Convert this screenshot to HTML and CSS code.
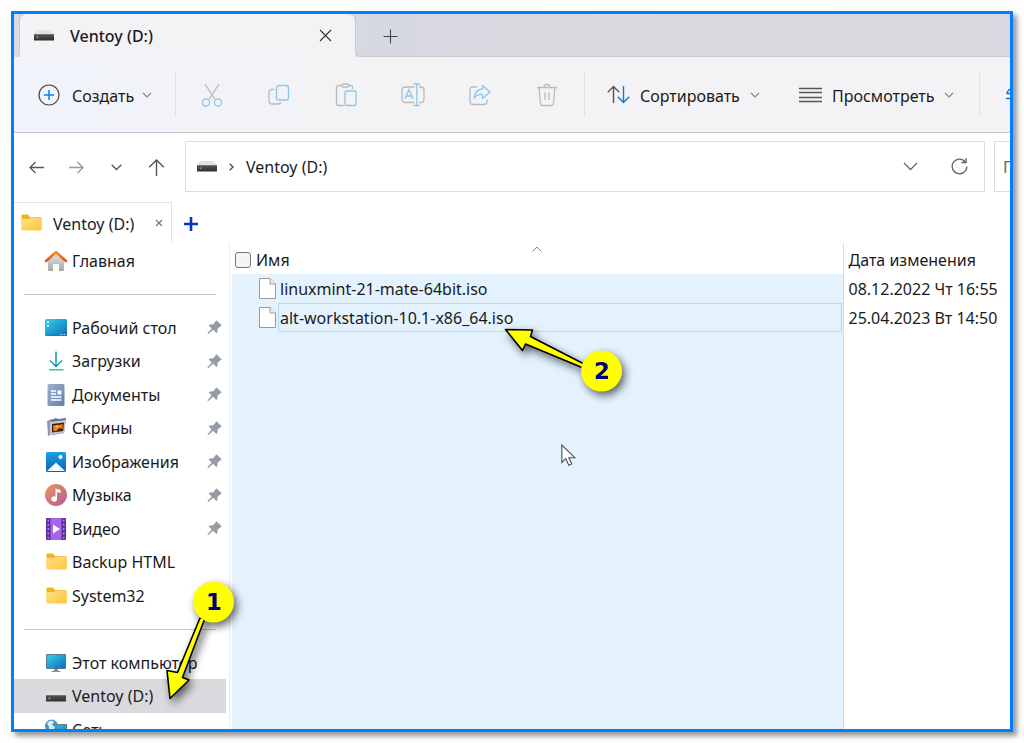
FILE: index.html
```html
<!DOCTYPE html>
<html lang="ru">
<head>
<meta charset="utf-8">
<title>Ventoy (D:)</title>
<meta name="viewport" content="width=device-width, initial-scale=1">
<link rel="stylesheet" href="styles.css">
</head>
<body>
<svg class="defs" aria-hidden="true">
  <defs>
    <linearGradient id="g-folder" x1="0" y1="0" x2="1" y2="1"><stop offset="0" stop-color="#ffe08a"/><stop offset="1" stop-color="#fcc63c"/></linearGradient>
    <linearGradient id="g-screen" x1="0" y1="0" x2="1" y2="1"><stop offset="0" stop-color="#34d3e0"/><stop offset="1" stop-color="#0f6cc0"/></linearGradient>
    <linearGradient id="g-house" x1="0" y1="0" x2="0" y2="1"><stop offset="0" stop-color="#e6e6e6"/><stop offset="1" stop-color="#a8a8a8"/></linearGradient>
    <linearGradient id="g-roof" x1="0" y1="0" x2="0" y2="1"><stop offset="0" stop-color="#f8912c"/><stop offset="1" stop-color="#d95412"/></linearGradient>
    <linearGradient id="g-down" x1="0" y1="0" x2="0" y2="1"><stop offset="0" stop-color="#3cbf9c"/><stop offset="1" stop-color="#158fb0"/></linearGradient>
    <linearGradient id="g-doc" x1="0" y1="0" x2="1" y2="1"><stop offset="0" stop-color="#9db4d0"/><stop offset="1" stop-color="#5f7fa8"/></linearGradient>
    <linearGradient id="g-pic" x1="0" y1="0" x2="0" y2="1"><stop offset="0" stop-color="#1aa0e8"/><stop offset="1" stop-color="#0c63b4"/></linearGradient>
    <linearGradient id="g-music" x1="0" y1="0" x2="1" y2="1"><stop offset="0" stop-color="#ee9560"/><stop offset="1" stop-color="#b65a92"/></linearGradient>
    <linearGradient id="g-bar" x1="0" y1="0" x2="0" y2="1"><stop offset="0" stop-color="#555"/><stop offset="1" stop-color="#303030"/></linearGradient>
    <symbol id="drive" viewBox="0 0 20 11"><path d="M3.500 0h13L20 4H0z" fill="#e2e2e2"/><path d="M0 4h20v6.500H0z" fill="url(#g-bar)"/><path d="M0 4h20v1H0z" fill="#777"/><circle cx="3.500" cy="7.300" r="1" fill="#36d336"/></symbol>
    <symbol id="folder" viewBox="0 0 21 18"><path d="M.5 1.500Q.5.500 1.500.500h5.500l2 2.500h10.500q1 0 1 1V15H.5z" fill="#f3b51f"/><path d="M.5 5h7.500l2-1.500h9.500q1 0 1 1v11q0 1-1 1h-18q-1 0-1-1z" fill="url(#g-folder)"/></symbol>
    <symbol id="chev" viewBox="0 0 10 6"><path d="M1 1l4 4 4-4" fill="none" stroke="currentColor" stroke-width="1.200"/></symbol>
    <symbol id="pin" viewBox="0 0 16 16"><path d="M9.500.800q.6-.6 1.200 0l4.500 4.500q.6.600 0 1.200l-1.200.500-2.700 2.400q.4 2.600-1.100 4.600L6.600 10.500 1.200 15.200l-.8-.8L5 9 1.600 5.600Q3.800 4.300 6.300 4.700L8.700 2z" fill="#949da5"/></symbol>
    <symbol id="file" viewBox="0 0 17 21"><path d="M.5.500H11l5.500 5.500v14.500H.5z" fill="#fff" stroke="#9a9a9a"/><path d="M11 .5V6h5.500" fill="#f1f1f1" stroke="#9a9a9a"/></symbol>
  </defs>
</svg>

<main class="window">
  <header class="titlebar">
    <span class="titlebar-edge"></span>
    <div class="tab">
      <svg class="drive"><use href="#drive"/></svg>
      <span class="tab-title">Ventoy (D:)</span>
      <button class="plain" aria-label="Закрыть"><svg width="13" height="13" viewBox="0 0 13 13"><path d="M1 1l11 11M12 1L1 12" stroke="#333" stroke-width="1.100"/></svg></button>
    </div>
    <div class="titlebar-rest">
      <button class="plain" aria-label="Новая вкладка"><svg width="15" height="15" viewBox="0 0 15 15"><path d="M7.500.500v14M.5 7.500h14" stroke="#444" stroke-width="1.100"/></svg></button>
    </div>
  </header>

  <div class="toolbar">
    <button class="tool tool-new">
      <svg width="22" height="22" viewBox="0 0 22 22" fill="none"><circle cx="11" cy="11" r="10" stroke="#444" stroke-width="1.200"/><path d="M11 6v10M6 11h10" stroke="#0a84d8" stroke-width="1.500"/></svg>
      <span>Создать</span><svg class="chev"><use href="#chev"/></svg>
    </button>
    <span class="divider"></span>
    <div class="tool-icons">
      <button class="plain" aria-label="Вырезать"><svg width="24" height="24" viewBox="0 0 24 24" fill="none" stroke-width="1.300"><path d="M5 1l9.800 15.200M19 1L9.200 16.200" stroke="#bbb"/><circle cx="6" cy="19.500" r="3.600" stroke="#8ec5ee"/><circle cx="18" cy="19.500" r="3.600" stroke="#8ec5ee"/></svg></button>
      <button class="plain" aria-label="Копировать"><svg width="24" height="24" viewBox="0 0 24 24" fill="none" stroke-width="1.300"><path d="M7 6.500H5Q2 6.500 2 9.500v8q0 3.500 3.500 3.500h5q3 0 3-2" stroke="#bbb"/><rect x="9.500" y="2.500" width="12" height="14.500" rx="2.500" stroke="#8ec5ee"/></svg></button>
      <button class="plain" aria-label="Вставить"><svg width="24" height="24" viewBox="0 0 24 24" fill="none" stroke-width="1.300"><path d="M8 2.500H4Q2.500 2.500 2.500 4v17q0 1.500 1.500 1.500h5.500M14.500 2.500H17q1.500 0 1.500 1.500v2" stroke="#bbb"/><rect x="8" y="1" width="7" height="3" rx="1.300" stroke="#bbb"/><rect x="11" y="8" width="11" height="14.500" rx="1.500" stroke="#8ec5ee"/></svg></button>
      <button class="plain" aria-label="Переименовать"><svg width="24" height="24" viewBox="0 0 24 24" fill="none" stroke-width="1.300"><path d="M13.500 4H4Q1 4 1 7v9q0 3.500 3 3.500h9.500M18 4h2q3 0 3 3v9q0 3.500-3 3.500h-2" stroke="#bbb"/><path d="M4 16l4-9.500L12 16M5.300 13h5.400M15.800 1v21.500M12.500 1h6.500M12.500 22.500h6.500" stroke="#8ec5ee"/></svg></button>
      <button class="plain" aria-label="Поделиться"><svg width="24" height="24" viewBox="0 0 24 24" fill="none" stroke-width="1.300"><path d="M9 4H5Q2 4 2 7v11q0 3.500 3 3.500h11q3 0 3-3v-2" stroke="#bbb"/><path d="M14.500 2.500l7.500 6.500-7.500 6.500v-4Q9 11 6 15.500 7 6.500 14.500 6z" stroke="#8ec5ee" stroke-linejoin="round"/></svg></button>
      <button class="plain" aria-label="Удалить"><svg width="24" height="24" viewBox="0 0 24 24" fill="none" stroke="#bbb" stroke-width="1.300"><path d="M2 4.500h20M4 4.500l1.500 16q.3 2 2 2h9q1.700 0 2-2l1.500-16M9 4.500Q9 1.500 12 1.500t3 3M10 9.500V17M14 9.500V17"/></svg></button>
    </div>
    <span class="divider"></span>
    <button class="tool tool-sort">
      <svg width="23" height="19" viewBox="0 0 23 19" fill="none" stroke-width="1.400"><path d="M6.500 18V1.500M.8 7.200L6.500 1.500l5.700 5.700" stroke="#555"/><path d="M16.500 1v16.500M10.800 11.800l5.700 5.700 5.700-5.700" stroke="#0a7bd0"/></svg>
      <span>Сортировать</span><svg class="chev"><use href="#chev"/></svg>
    </button>
    <button class="tool tool-view">
      <svg width="23" height="16" viewBox="0 0 23 16"><path d="M0 1.500h23M0 5.500h23M0 10.500h23M0 14.500h23" stroke="#555" stroke-width="1.300"/></svg>
      <span>Просмотреть</span><svg class="chev"><use href="#chev"/></svg>
    </button>
    <span class="divider"></span>
    <button class="plain tool-more" aria-label="Ещё"><svg width="22" height="20" viewBox="0 0 22 20" fill="none" stroke="#0a7bd0" stroke-width="1.400"><path d="M9 1Q1 5 1 8.500h8M0 13.500h10"/></svg></button>
  </div>

  <nav class="address-row" aria-label="Адрес">
    <div class="history">
      <button class="plain" aria-label="Назад"><svg width="15" height="13" viewBox="0 0 15 13" fill="none" stroke="#555" stroke-width="1.300"><path d="M15 6.500H1M6.500 1L1 6.500 6.500 12"/></svg></button>
      <button class="plain" aria-label="Вперёд"><svg width="15" height="13" viewBox="0 0 15 13" fill="none" stroke="#999" stroke-width="1.300"><path d="M0 6.500h14M8.500 1L14 6.500 8.500 12"/></svg></button>
      <button class="plain" aria-label="Последние"><svg width="11" height="7" viewBox="0 0 11 7" fill="none" stroke="#555" stroke-width="1.300"><path d="M.7.700l4.800 4.800L10.300.700"/></svg></button>
      <button class="plain" aria-label="Вверх"><svg width="17" height="17" viewBox="0 0 17 17" fill="none" stroke="#555" stroke-width="1.400"><path d="M8.500 17V1M1.200 8.300L8.500 1l7.300 7.300"/></svg></button>
    </div>
    <div class="address">
      <svg class="drive"><use href="#drive"/></svg>
      <svg width="5" height="8" viewBox="0 0 5 8" fill="none" stroke="#444" stroke-width="1.300"><path d="M.7.700L4 4 .7 7.300"/></svg>
      <a href="#" class="crumb">Ventoy (D:)</a>
      <button class="plain" aria-label="Журнал"><svg width="15" height="9" viewBox="0 0 15 9" fill="none" stroke="#666" stroke-width="1.300"><path d="M1 1l6.500 6.500L14 1"/></svg></button>
      <button class="plain" aria-label="Обновить"><svg width="17" height="17" viewBox="0 0 17 17" fill="none" stroke="#666" stroke-width="1.300"><path d="M14.300 4A7.300 7.300 0 1 0 15.800 8.500M15 0v4.500h-4.500"/></svg></button>
    </div>
    <input class="search" aria-label="Поиск" placeholder="Поиск">
  </nav>

  <div class="subtabs">
    <div class="subtab">
      <svg class="folder"><use href="#folder"/></svg>
      <span class="subtab-title">Ventoy (D:)</span>
      <button class="plain" aria-label="Закрыть папку"><svg width="8" height="8" viewBox="0 0 8 8"><path d="M1 1l6 6M7 1L1 7" stroke="#777" stroke-width="1.200"/></svg></button>
    </div>
    <button class="plain subtab-add" aria-label="Добавить"><svg width="14" height="14" viewBox="0 0 14 14"><path d="M7 0v14M0 7h14" stroke="#0b35c8" stroke-width="2.600"/></svg></button>
  </div>

  <div class="body">
    <aside class="sidebar">
      <ul class="nav">
        <li><a href="#"><svg width="22" height="22" viewBox="0 0 22 22"><path d="M3 9l8-7 8 7v11q0 1-1 1h-4v-7H8v7H4q-1 0-1-1z" fill="url(#g-house)"/><path d="M1 11L11 2l10 9" fill="none" stroke="url(#g-roof)" stroke-width="2.600" stroke-linecap="round" stroke-linejoin="round"/></svg>Главная</a></li>
        <li class="separator"></li>
        <li><a href="#"><svg width="22" height="18" viewBox="0 0 22 18"><rect width="22" height="17" rx="1.500" fill="url(#g-screen)"/><path d="M0 15.500h22v1H1z" fill="#1478bd"/><path d="M2 2.500h2v1.500H2zM2 6h2v1.500H2z" fill="#fff"/><path d="M15.500 15h1.500v1h-1.500zM18.500 15h1.500v1h-1.500z" fill="#cdf"/></svg>Рабочий стол</a><svg class="pin"><use href="#pin"/></svg></li>
        <li><a href="#"><svg width="22" height="22" viewBox="0 0 22 22" fill="none" stroke-width="1.500"><path d="M11 2v13.500M5 10.500l6 6 6-6" stroke="url(#g-down)"/><path d="M11 1.500v10" stroke="#35b99b"/><path d="M4 19.800h14.500" stroke="#3cc4a4"/></svg>Загрузки</a><svg class="pin"><use href="#pin"/></svg></li>
        <li><a href="#"><svg width="22" height="22" viewBox="0 0 22 22"><rect x="2.500" width="17" height="22" rx="1.500" fill="url(#g-doc)"/><path d="M6 7h5M6 10h5M6 13h10.500M6 16h10.500" stroke="#fff" stroke-width="1.300"/><path d="M12.500 6.500h4v4h-4z" fill="#fff"/></svg>Документы</a><svg class="pin"><use href="#pin"/></svg></li>
        <li><a href="#"><svg width="22" height="22" viewBox="0 0 22 22"><path d="M2 4l5-2 1 15-5 2z" fill="#9297ae"/><path d="M6 3l5-2 2 1 8-1-2 15L7 18z" fill="#6c7088"/><path d="M5 5l16-2-1.500 12.500L5 18z" fill="#c5c7d6"/><path d="M7 7l12-1.500-.8 8.500L7 15.500z" fill="#3b1e10"/><path d="M8 8.500l10-1.300-.5 5q-3-2-5 .5t-4 1z" fill="#f07d1a"/><circle cx="12" cy="9.500" r="1.200" fill="#ffc62e"/></svg>Скрины</a><svg class="pin"><use href="#pin"/></svg></li>
        <li><a href="#"><svg width="22" height="22" viewBox="0 0 22 22"><rect x="1" y="1" width="20" height="20" rx="1.500" fill="url(#g-pic)"/><path d="M2 20l9-8.500 9 8.500z" fill="#f1f8ff"/><circle cx="15.500" cy="6" r="2" fill="#fff"/></svg>Изображения</a><svg class="pin"><use href="#pin"/></svg></li>
        <li><a href="#"><svg width="22" height="22" viewBox="0 0 22 22"><circle cx="11" cy="11" r="11" fill="url(#g-music)"/><circle cx="9.200" cy="15" r="2.800" fill="#fff"/><path d="M10.500 4.500l5 1.500v3l-3.500-1v7h-1.500z" fill="#fff"/></svg>Музыка</a><svg class="pin"><use href="#pin"/></svg></li>
        <li><a href="#"><svg width="22" height="22" viewBox="0 0 22 22"><rect x="1" width="20" height="22" rx="1" fill="#5b2d9c"/><path d="M5.500 0h11v22h-11z" fill="#a864e8"/><path d="M3.300 1.500v20M18.700 1.500v20" stroke="#b48ae0" stroke-width="1.500" stroke-dasharray="2 2.300"/><path d="M8 6.500l7 4.500-7 4.500z" fill="#fff"/></svg>Видео</a><svg class="pin"><use href="#pin"/></svg></li>
        <li><a href="#"><svg width="22" height="18" viewBox="0 0 22 18"><use href="#folder" x="1" width="21" height="18"/></svg>Backup HTML</a></li>
        <li><a href="#"><svg width="22" height="18" viewBox="0 0 22 18"><use href="#folder" x="1" width="21" height="18"/></svg>System32</a></li>
        <li class="separator"></li>
        <li><a href="#"><svg width="22" height="20" viewBox="0 0 22 20"><path d="M9 15h4v3h2.500v1h-9v-1H9z" fill="#7f8e9a"/><rect x="1" y="1" width="20" height="15" rx="1" fill="#587a92"/><rect x="2" y="2" width="18" height="13" fill="url(#g-screen)"/></svg>Этот компьютер</a></li>
        <li class="selected"><a href="#"><svg width="22" height="11" viewBox="0 0 22 11"><use href="#drive" x="1" width="20" height="11"/></svg>Ventoy (D:)</a></li>
        <li><a href="#"><svg width="22" height="22" viewBox="0 0 22 22"><rect x="7" y="5" width="15" height="13" fill="#587a92"/><rect x="8" y="6" width="13" height="11" fill="url(#g-screen)"/><circle cx="6.500" cy="7" r="6.500" fill="#4b93bd"/><path d="M2 4Q6 0 9 3L7 6l3 2-2 4Q3 11 4 8z" fill="#d6ecf5"/></svg>Сеть</a></li>
      </ul>
    </aside>

    <section class="files">
      <table class="listing">
        <thead>
          <tr>
            <th class="col-name"><label class="pick"><input type="checkbox">Имя</label><svg class="sort-mark" viewBox="0 0 10 6"><path d="M.5 5.500L5 1l4.500 4.500" fill="none" stroke="#888"/></svg></th>
            <th class="col-date">Дата изменения</th>
          </tr>
        </thead>
        <tbody>
          <tr><td class="name"><div class="entry"><svg class="file"><use href="#file"/></svg><span class="entry-name">linuxmint-21-mate-64bit.iso</span></div></td><td class="date">08.12.2022 Чт 16:55</td></tr>
          <tr><td class="name"><div class="entry"><svg class="file"><use href="#file"/></svg><span class="entry-name focused">alt-workstation-10.1-x86_64.iso</span></div></td><td class="date">25.04.2023 Вт 14:50</td></tr>
          <tr class="rest"><td class="name"></td><td class="date"></td></tr>
        </tbody>
      </table>
    </section>
  </div>

  <svg class="callout callout-one" width="90" height="130" viewBox="0 0 90 130" role="img" aria-label="1">
    <path d="M43 48L20.500 102.500 10 100.500 13 128.500 32 110 25.500 107.500 48 48z" fill="#ff0" stroke="#000" stroke-width="1.600" stroke-linejoin="round"/>
    <circle cx="56.500" cy="32" r="20.500" fill="#ff0"/>
    <text x="57" y="40">1</text>
  </svg>
  <svg class="callout callout-two" width="140" height="90" viewBox="0 0 140 90" role="img" aria-label="2">
    <path d="M5.500 9.500L32.500 10 30.500 16.500 88 46v4L25.500 24 22.500 30.500z" fill="#ff0" stroke="#000" stroke-width="1.600" stroke-linejoin="round"/>
    <circle cx="101.500" cy="51" r="20.500" fill="#ff0"/>
    <text x="102" y="59">2</text>
  </svg>
  <svg class="pointer" width="16" height="23" viewBox="0 0 16 23"><path d="M.8 1v17.500l4-3.800 3 6.500 3-1.300-3-6.200h6z" fill="#fff" stroke="#4a4f60" stroke-width="1.100"/></svg>
</main>
</body>
</html>
```
FILE: styles.css
```css
* { box-sizing: border-box; }

body {
  margin: 0;
  height: 100vh;
  padding: 11px;
  display: flex;
  background: #fdfdfd;
  color: #1b1b1b;
  font: 16px/24px "Noto Sans", "Open Sans", sans-serif;
}

svg { display: block; flex: none; }
.defs { position: absolute; width: 0; height: 0; }
a { color: inherit; text-decoration: none; }
button { font: inherit; color: inherit; }

.plain {
  display: flex;
  align-items: center;
  justify-content: center;
  padding: 0;
  border: 0;
  background: none;
}

.window {
  position: relative;
  flex: 1;
  min-width: 0;
  display: flex;
  flex-direction: column;
  overflow: hidden;
  border: 3px solid #0080ff;
  background: #fff;
  box-shadow: 4px 4px 5px rgba(0, 0, 0, .4);
}

.drive { width: 20px; height: 11px; }
.folder { width: 21px; height: 18px; }
.chev { width: 10px; height: 6px; color: #888; }

/* Window tabs */
.titlebar { flex: none; display: flex; height: 43px; background: #d9dae2; }
.titlebar-edge { width: 6px; background: #d9dae2; border-right: 1px solid #cacad2; border-bottom-right-radius: 5px; }
.tab {
  width: 335px;
  display: flex;
  align-items: center;
  padding: 0 23px 0 14px;
  background: #f3f3f6;
  border-radius: 8px 8px 0 0;
}
.tab-title { flex: 1; padding-left: 16px; font-weight: 500; }
.titlebar-rest {
  flex: 1;
  display: flex;
  padding-left: 27px;
  padding-top: 2px;
  background: linear-gradient(90deg, #d6d8e2, #dad9de 40%, #d8d8e0);
  border-left: 1px solid #c8c9d1;
  border-bottom: 1px solid #cccbd2;
  border-bottom-left-radius: 6px;
}

/* Commands */
.toolbar {
  flex: none;
  display: flex;
  align-items: center;
  height: 76px;
  overflow: hidden;
  background: linear-gradient(90deg, #f0f3fa, #f3f3f6 30%);
  border-bottom: 1px solid #c3c7d0;
}
.divider { flex: none; width: 1px; height: 44px; background: #dfe0e4; }
.tool {
  flex: none;
  display: flex;
  align-items: center;
  gap: 10px;
  padding: 0;
  border: 0;
  background: none;
  white-space: nowrap;
}
.tool span { padding-top: 2px; }
.tool-new { width: 161px; padding-left: 24px; }
.tool-new span { padding-left: 2px; }
.tool-new .chev { margin-left: -2px; }
.tool-icons { display: flex; padding: 0 4px 0 2px; }
.tool-icons .plain { width: 67px; height: 44px; }
.tool-sort { width: 191px; padding-left: 22px; }
.tool-view { width: 203px; padding-left: 23px; }
.tool-more { flex: none; padding-left: 26px; }

/* Address */
.address-row { flex: none; display: flex; height: 69px; padding-top: 8px; }
.history { width: 171px; height: 52px; flex: none; display: flex; padding-left: 2px; }
.history .plain { width: 40px; }
.address {
  flex: 1;
  height: 51px;
  display: flex;
  align-items: center;
  gap: 12px;
  padding: 0 6px 0 11px;
  border: 1px solid #dcdcdc;
}
.crumb { flex: 1; }
.address .plain { width: 37px; height: 36px; }
.search {
  width: 16px;
  height: 51px;
  flex: none;
  margin-left: 9px;
  padding: 0 0 0 8px;
  border: 1px solid #dcdcdc;
  border-right: 0;
  border-radius: 0;
  background: #fff;
  font: inherit;
}
.search::placeholder { color: #666; }

/* Folder tabs */
.subtabs { flex: none; display: flex; height: 41px; }
.subtab {
  width: 158px;
  display: flex;
  align-items: center;
  padding: 0 8px 0 7px;
  border-top: 1px solid #e2e2e2;
  border-right: 1px solid #e2e2e2;
}
.subtab-title { flex: 1; padding: 2px 0 0 11px; }
.subtab-add { padding: 2px 0 0 12px; }

/* Content */
.body { flex: 1; min-height: 0; display: flex; overflow: hidden; }
.sidebar { width: 216px; flex: none; overflow: hidden; border-right: 1px solid #ececec; }
.nav { margin: 0; padding: 1px 3px 0 0; list-style: none; }
.nav li { display: flex; align-items: center; height: 33px; padding: 0 4px 0 31px; }
.nav li:nth-child(even) { height: 34px; }
.nav a { flex: 1; display: flex; align-items: center; gap: 5px; white-space: nowrap; }
.nav .separator { padding: 0 10px; }
.separator::before { content: ""; flex: 1; height: 1px; background: #c6c8ca; }
.nav .selected { background: #d9d9de; }
.pin { width: 15px; height: 15px; }

.files { flex: 1; min-width: 0; padding-left: 2px; }
.listing { width: 100%; height: 100%; border-collapse: collapse; table-layout: fixed; }
.listing th, .listing td { padding: 0; font-weight: 400; text-align: left; white-space: nowrap; }
.listing th { height: 31px; }
.listing td { height: 29px; }
.listing .rest td { height: auto; }
.listing .col-name { position: relative; border-right: 1px solid #d5dde4; }
.listing .col-date { width: 167px; padding: 2px 0 0 5px; }
.listing .name { background: #e4f2fe; border-right: 1px solid #c9dcec; }
.listing .date { padding-left: 5px; }
.pick { display: flex; align-items: center; gap: 5px; padding: 2px 0 0 3px; }
.pick input {
  appearance: none;
  width: 16px;
  height: 16px;
  margin: 0;
  border: 1px solid #777;
  border-radius: 3px;
  background: #f4f4f6;
}
.sort-mark { position: absolute; left: 50%; top: 3px; width: 10px; height: 6px; margin-left: -5px; }
.entry { display: flex; align-items: center; gap: 2px; padding: 0 1px 0 27px; }
.file { width: 17px; height: 21px; }
.entry-name { flex: 1; height: 29px; padding-left: 1px; border: 1px solid transparent; line-height: 28px; }
.focused { border-color: #b2daf8; }

/* Callouts lie over the window */
.callout { position: absolute; overflow: visible; filter: drop-shadow(3px 4px 4px rgba(0, 0, 0, .6)); }
.callout text { fill: #000080; font: 700 23px "DejaVu Sans", sans-serif; text-anchor: middle; }
.callout-one { left: 143px; top: 556px; }
.callout-two { left: 486px; top: 306px; }
.pointer { position: absolute; left: 547px; top: 430px; }
```
